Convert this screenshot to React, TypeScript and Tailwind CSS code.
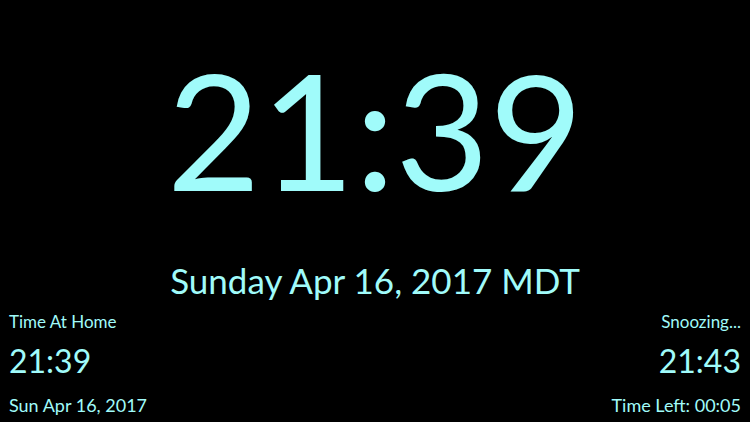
export default function App() {
  const font = { fontFamily: '"Lato", "Noto Sans", sans-serif' };
  return (
    <div
      className="w-[750px] h-[422px] bg-black text-[#a0fbfa] flex flex-col overflow-hidden select-none"
      style={font}
    >
      <div className="flex justify-center pt-[44px] h-[260px]">
        <span className="text-[162px] leading-[170px]">21:39</span>
      </div>
      <div className="flex justify-center">
        <span className="text-[35px] leading-[42px]">Sunday Apr 16, 2017 MDT</span>
      </div>
      <div className="flex justify-between items-end px-[9px] pt-[9px]">
        <div className="flex flex-col items-start">
          <span className="text-[17px] leading-[24px]">Time At Home</span>
          <span className="text-[32px] leading-[54px]">21:39</span>
          <span className="text-[18px] leading-[34px]">Sun Apr 16, 2017</span>
        </div>
        <div className="flex flex-col items-end">
          <span className="text-[17px] leading-[24px]">Snoozing...</span>
          <span className="text-[32px] leading-[54px]">21:43</span>
          <span className="text-[18px] leading-[34px]">Time Left: 00:05</span>
        </div>
      </div>
    </div>
  );
}
